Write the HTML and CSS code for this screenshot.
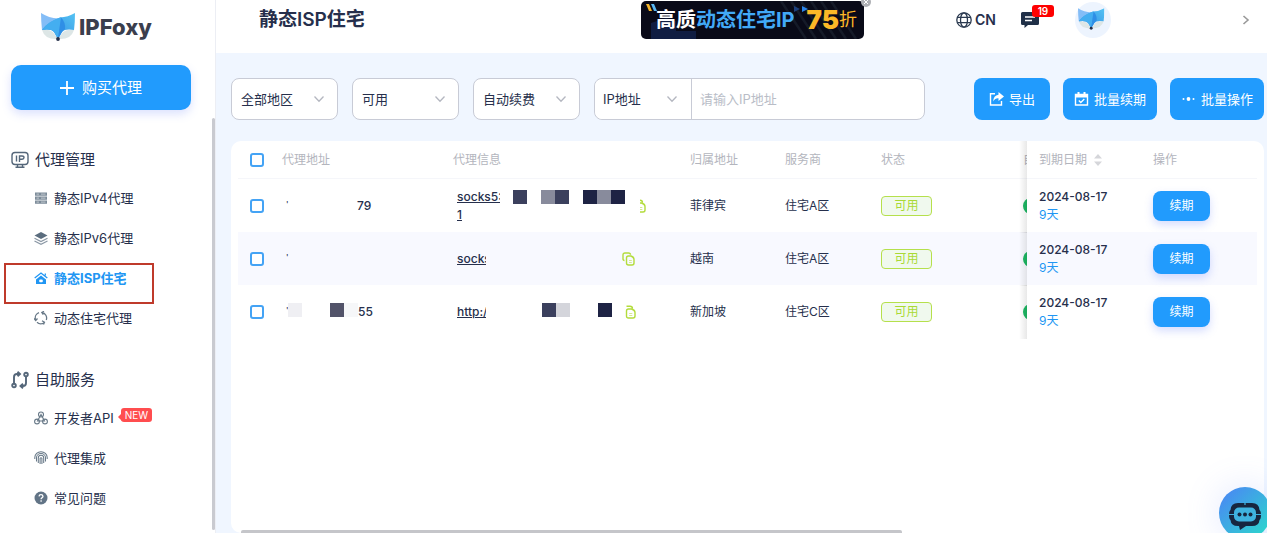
FILE: index.html
```html
<!DOCTYPE html>
<html lang="zh-CN">
<head>
<meta charset="utf-8">
<meta name="viewport" content="width=device-width, initial-scale=1">
<title>IPFoxy - 静态ISP住宅</title>
<link rel="stylesheet" href="styles.css">
</head>
<body>
<svg class="defs" aria-hidden="true">
  <defs>
    <linearGradient id="ga" x1="0" y1="0" x2="1" y2="1"><stop offset="0" stop-color="#86bdf6"/><stop offset="1" stop-color="#7fbdf8"/></linearGradient>
    <linearGradient id="gb" x1="0" y1="1" x2="1" y2="0"><stop offset="0" stop-color="#2c86e2"/><stop offset="1" stop-color="#55c3f3"/></linearGradient>
  </defs>
  <symbol id="fox" viewBox="0 0 34 28">
    <path d="M1 17Q8 16 12 19L17 26Q4 27 1 17ZM33 17Q26 16 22 19L17 26Q30 27 33 17Z" fill="#dde6e6"/>
    <path d="M0 0Q8 5 17 5.500L13 12 1 17Q0 8 0 0Z" fill="url(#ga)"/>
    <path d="M1 17Q7 9 19 4.500 27 4 34 0 34 9 33 17 24 15.500 21 19L17 26 13 19Q10 15.500 1 17Z" fill="url(#gb)"/>
    <path d="M1 17Q7 8 20 4.300L17 26 13 19Q10 15.500 1 17Z" fill="#44aef0"/>
    <path d="M17 26 20 4.300Q25 10 24 16.200 22 17 21 19Z" fill="#2f8fe6"/>
    <circle cx="17" cy="26" r="1.900" fill="#26304a"/>
  </symbol>
  <symbol id="chev" viewBox="0 0 12 8"><path d="M1.500 1.500 6 6.200 10.500 1.500" fill="none" stroke="currentColor" stroke-width="1.300"/></symbol>
  <symbol id="copy" viewBox="0 0 13 14"><path d="M2.500 8.500Q1 8.500 1 7V3Q1 1 3 1H6.500Q8.500 1 8.500 2.800M6.500 4H9Q12 5 12 7.500V11Q12 13 10 13H6.500Q4.500 13 4.500 11V6Q4.500 4 6.500 4Z" fill="none" stroke="#b3dc3c" stroke-width="1.400"/><path d="M7 8.500H9.800M7 10.500H9.800" stroke="#d3eb90" stroke-width="1"/></symbol>
  <symbol id="copy2" viewBox="0 0 11 14"><path d="M1.500 1.300H5Q7.500 1.300 7.500 3.500M3.500 4H6.500Q10 5 10 7.500V11Q10 13 8 13H3.500Q1.500 13 1.500 11V6Q1.500 4 3.500 4Z" fill="none" stroke="#b3dc3c" stroke-width="1.400"/><path d="M4.200 8.500H7.300M4.200 10.500H7.300" stroke="#d3eb90" stroke-width="1"/></symbol>
</svg>

<div class="app">
  <aside class="sidebar">
    <a class="logo" href="#"><svg class="logo-mark"><use href="#fox"/></svg><span>IPFoxy</span></a>
    <button class="buy" type="button"><svg viewBox="0 0 14 14"><path d="M7 0V14M0 7H14" stroke="#fff" stroke-width="1.800"/></svg>购买代理</button>
    <nav class="menu">
      <h2><svg viewBox="0 0 18 18" fill="none" stroke="#55677a" stroke-width="1.400"><rect x="1" y="1.500" width="16" height="12" rx="3"/><path d="M5.500 4.500V10.500M8.500 11V5H11Q13 5 13 6.600T11 8.300H8.500M6.500 13.500V16M11.500 13.500V16M4.500 16.300H13.500"/></svg>代理管理</h2>
      <ul>
        <li><a href="#"><svg viewBox="0 0 14 14"><path d="M1 1.500H13V4.700H1ZM1 5.600H13V8.700H1ZM1 9.600H13V12.700H1Z" fill="#7c8b99"/><path d="M2.500 3.100H5M2.500 7.100H5M2.500 11.100H5M7 3.100H11.500M7 7.100H11.500M7 11.100H11.500" stroke="#dfe4e8" stroke-width=".7"/></svg>静态IPv4代理</a></li>
        <li><a href="#"><svg viewBox="0 0 14 14"><path d="M7 1 13.500 4.500 7 8 .5 4.500Z" fill="#5b6d7e"/><path d="M.5 7.200 7 10.500 13.500 7.200M.5 10 7 13.300 13.500 10" fill="none" stroke="#8b98a5" stroke-width="1.200"/></svg>静态IPv6代理</a></li>
        <li class="active"><a href="#"><svg viewBox="0 0 14 14"><path d="M.7 7 7 2 13.300 7M11.300 2.500V4.500" fill="none" stroke="#2196f3" stroke-width="1.300"/><path d="M7 4.500 12 8.500V13H2V8.500Z" fill="#2196f3"/><rect x="5.200" y="8.500" width="3.600" height="2.800" rx="1" fill="#fff"/></svg>静态ISP住宅</a></li>
        <li><a href="#"><svg viewBox="0 0 14 14"><path d="M5 1.600A5.700 5.700 0 0 0 1.500 8.500M3 11.300A5.700 5.700 0 0 0 10.500 11.500M12.300 9A5.700 5.700 0 0 0 8 1.500M0 7.500 1.700 9.500 3.500 7.500M8 9.700 10.500 11.300 9.500 13.500M10 .3 7.800 1.500 9.300 3.700" fill="none" stroke="#687988" stroke-width="1.300"/></svg>动态住宅代理</a></li>
      </ul>
      <h2><svg viewBox="0 0 18 18" fill="none" stroke="#55677a" stroke-width="1.900"><path d="M3 12V6Q3 3 6 3H8.500M6.500 .8 9 3 6.500 5.300M15 6V12Q15 15 12 15H10M12 12.700 9.500 15 12 17.200"/><circle cx="3" cy="14.500" r="1.800"/><circle cx="15" cy="3.500" r="1.800"/></svg>自助服务</h2>
      <ul>
        <li><a href="#"><svg viewBox="0 0 14 14" fill="none" stroke="#687988" stroke-width="1.100"><circle cx="7" cy="3.500" r="2.500"/><circle cx="3" cy="10.500" r="2.400"/><circle cx="11" cy="10.500" r="2.400"/><path d="M7 3.500 3.500 10H10.500Z"/></svg>开发者API</a><span class="new">NEW</span></li>
        <li><a href="#"><svg viewBox="0 0 14 14" fill="none" stroke="#687988" stroke-width="1.050"><path d="M.8 8V6.500A6.200 5.700 0 0 1 13.200 6.500V8M2.500 10.500V6.800A4.500 4.300 0 0 1 11.500 6.800V10.500M4.300 12V7A2.700 2.700 0 0 1 9.700 7V12M6.100 13V7.300Q7 6 7.900 7.300V13"/></svg>代理集成</a></li>
        <li><a href="#"><svg viewBox="0 0 14 14"><circle cx="7" cy="7" r="6.500" fill="#627486"/><path d="M5 5.400Q5.200 3.700 7 3.700T9 5.300Q9 6.300 7.900 6.800Q7.100 7.200 7.100 8.300M7.100 9.300V10.700" fill="none" stroke="#fff" stroke-width="1.300"/></svg>常见问题</a></li>
      </ul>
    </nav>
    <div class="side-thumb"></div>
  </aside>

  <div class="page">
    <header class="header">
      <h1>静态ISP住宅</h1>
      <a class="banner" href="#">
        <svg class="banner-art" viewBox="0 0 223 38" preserveAspectRatio="none"><path d="M10 22 25 17 35 20V38H10ZM35 30H55V38H35Z" fill="#101d42"/><path d="M140 0 165 38M150 0 175 38M160 0 185 38M170 0 195 38M180 0 205 38M190 0 215 38" stroke="#151a28" stroke-width="2.500"/><path d="M5 3H8L11 10H8Z" fill="#f5b52c"/><path d="M10 3H13L16 10H13Z" fill="#59b8f5"/><path d="M153 5 159 8 153 11Z" fill="#1c3f7c"/><path d="M161 5 167 8 161 11Z" fill="#2b83e8"/></svg>
        <span class="b-white">高质</span><span class="b-blue">动态住宅IP</span><strong>75</strong><span class="b-off">折</span>
        <svg class="banner-close" viewBox="0 0 10 10"><circle cx="5" cy="5" r="5" fill="#aeb0b5"/><path d="M3 3 7 7M7 3 3 7" stroke="#fff" stroke-width="1"/></svg>
      </a>
      <div class="tools">
        <button class="lang" type="button"><svg viewBox="0 0 16 16" fill="none" stroke="#2b3a50" stroke-width="1.300"><circle cx="8" cy="8" r="7.200"/><ellipse cx="8" cy="8" rx="3.500" ry="7.200"/><path d="M1.500 5.300H14.500M1.500 10.700H14.500"/></svg>CN</button>
        <button class="msg" type="button" aria-label="消息"><svg viewBox="0 0 18 16"><path d="M1.500 0H16.500Q18 0 18 1.500V11.500Q18 13 16.500 13H7L3.500 16V13H1.500Q0 13 0 11.500V1.500Q0 0 1.500 0Z" fill="#1f2f47"/><path d="M4 5H14M4 8.500H11" stroke="#fff" stroke-width="1.400"/></svg><span class="count">19</span></button>
        <a class="avatar" href="#" aria-label="账户"><svg><use href="#fox"/></svg></a>
        <button class="more" type="button" aria-label="展开"><svg viewBox="0 0 8 10"><path d="M1.500 1 6 5 1.500 9" fill="none" stroke="#999" stroke-width="1.600"/></svg></button>
      </div>
    </header>

    <main class="content">
      <div class="toolbar">
        <label class="pick"><select aria-label="地区"><option>全部地区</option></select><svg><use href="#chev"/></svg></label>
        <label class="pick"><select aria-label="状态"><option>可用</option></select><svg><use href="#chev"/></svg></label>
        <label class="pick"><select aria-label="续费"><option>自动续费</option></select><svg><use href="#chev"/></svg></label>
        <div class="search">
          <label class="pick"><select aria-label="搜索类型"><option>IP地址</option></select><svg><use href="#chev"/></svg></label>
          <input type="text" placeholder="请输入IP地址" aria-label="IP地址">
        </div>
        <div class="actions">
          <button type="button"><svg viewBox="0 0 15 14"><path d="M6 1.800H1.500V13H12.500V9" fill="none" stroke="#fff" stroke-width="1.400"/><path d="M9.500 0 15 4.500 9.500 9V6.300Q6 6 4.300 9.500Q4.300 3.500 9.500 2.800Z" fill="#fff"/></svg>导出</button>
          <button type="button"><svg viewBox="0 0 15 14"><path d="M1.500 2.500H13.500V13H1.500Z" fill="none" stroke="#fff" stroke-width="1.400"/><path d="M1 2H14V5.500H1ZM3.500 0H5.500V3H3.500ZM9.500 0H11.500V3H9.500Z" fill="#fff"/><path d="M4.800 8.500 6.800 10.500 10.300 7" fill="none" stroke="#fff" stroke-width="1.300"/></svg>批量续期</button>
          <button type="button"><svg viewBox="0 0 15 14" fill="#fff"><circle cx="2.500" cy="7" r="1"/><circle cx="7.500" cy="7" r="1.900"/><circle cx="12.500" cy="7" r="1"/></svg>批量操作</button>
        </div>
      </div>

      <section class="card">
        <table>
          <colgroup><col class="c-check"><col class="c-addr"><col class="c-info"><col class="c-area"><col class="c-isp"><col><col class="c-auto"><col class="c-date"><col class="c-op"></colgroup>
          <thead>
            <tr>
              <th class="check"><input type="checkbox" aria-label="全选"></th>
              <th>代理地址</th><th>代理信息</th><th>归属地址</th><th>服务商</th><th>状态</th><th class="auto">自</th>
              <th class="fixed"><span class="sort">到期日期<svg viewBox="0 0 10 14" fill="#d5d6da"><path d="M5 1 9 5.500H1ZM5 13 9 8.500H1Z"/></svg></span></th><th>操作</th>
            </tr>
          </thead>
          <tbody>
            <tr>
              <td class="check"><input type="checkbox" aria-label="选择第1行"></td>
              <td class="pad"><div class="mix"><span class="tick">'</span><span class="tail">79</span></div></td>
              <td class="pad"><div class="mix tall"><a class="uri" href="#"><span>socks5:/</span><br>1</a><div class="mosaic"><i class="k2"></i><i></i><i class="k4"></i><i class="k2"></i><i></i><i class="k1"></i><i class="k4"></i><i class="k1"></i></div><button class="copy cut" type="button" aria-label="复制"><svg><use href="#copy2"/></svg></button></div></td>
              <td>菲律宾</td><td>住宅A区</td><td><span class="tag">可用</span></td>
              <td class="auto"><span class="switch"></span></td>
              <td class="fixed"><time>2024-08-17</time><em>9天</em></td>
              <td><button class="renew" type="button">续期</button></td>
            </tr>
            <tr class="odd">
              <td class="check"><input type="checkbox" aria-label="选择第2行"></td>
              <td class="pad"><div class="mix"><span class="tick">'</span></div></td>
              <td class="pad"><div class="mix"><a class="uri short" href="#">socks</a><button class="copy far" type="button" aria-label="复制"><svg><use href="#copy"/></svg></button></div></td>
              <td>越南</td><td>住宅A区</td><td><span class="tag">可用</span></td>
              <td class="auto"><span class="switch"></span></td>
              <td class="fixed"><time>2024-08-17</time><em>9天</em></td>
              <td><button class="renew" type="button">续期</button></td>
            </tr>
            <tr>
              <td class="check"><input type="checkbox" aria-label="选择第3行"></td>
              <td class="pad"><div class="mix"><span class="tick">'</span><div class="mosaic"><i class="k6"></i><i></i><i></i><i class="k3"></i><i class="k7"></i></div><span>55</span></div></td>
              <td class="pad"><div class="mix"><a class="uri short" href="#">http:/</a><div class="mosaic end"><i class="k2"></i><i class="k5"></i><i></i><i></i><i class="k1"></i></div><button class="copy near" type="button" aria-label="复制"><svg><use href="#copy2"/></svg></button></div></td>
              <td>新加坡</td><td>住宅C区</td><td><span class="tag">可用</span></td>
              <td class="auto"><span class="switch"></span></td>
              <td class="fixed"><time>2024-08-17</time><em>9天</em></td>
              <td><button class="renew" type="button">续期</button></td>
            </tr>
          </tbody>
        </table>
        <div class="scroll-thumb"></div>
      </section>
    </main>
  </div>
</div>
<button class="chat" type="button" aria-label="在线客服"><svg viewBox="0 0 34 28"><path d="M10 1H24Q31 1 31.500 8Q33 9 33 13T31.500 18Q31 24 24 24H18L12 28 11 24H10Q3 24 2.500 18Q1 17 1 13T2.500 8Q3 1 10 1Z" fill="#17263f"/><rect x="6" y="5.500" width="22" height="14" rx="5" fill="#3fb3e0"/><path d="M0 12.500H6M28 12.500H34M17 0V3" stroke="#3fb3e0" stroke-width="1.200"/><circle cx="11.500" cy="12.500" r="2" fill="#17263f"/><circle cx="17" cy="12.500" r="2" fill="#17263f"/><circle cx="22.500" cy="12.500" r="2" fill="#17263f"/></svg></button>
</body>
</html>
```
FILE: styles.css
```css
*, *::before, *::after { box-sizing: border-box; }
body {
  margin: 0;
  font: 400 12px/18px Inter, "Noto Sans CJK SC", sans-serif;
  color: #262f4c;
  background: #f0f6ff;
}
button, input, select { font: inherit; color: inherit; }
button { border: 0; padding: 0; background: none; cursor: pointer; }
a { color: inherit; text-decoration: none; }
h1, h2, ul { margin: 0; padding: 0; list-style: none; }
svg { display: block; flex: none; }
.defs { position: absolute; width: 0; height: 0; }

.app { display: flex; min-height: 100vh; }

/* Sidebar */
.sidebar {
  position: relative;
  flex: none;
  width: 216px;
  background: #fff;
  border-right: 1px solid #eceef4;
}
.logo {
  display: flex;
  align-items: center;
  gap: 4px;
  height: 65px;
  padding: 0 0 11px 41px;
  font-size: 22px;
  font-weight: 800;
  color: #3b3e4d;
}
.logo-mark { width: 34px; height: 28px; }
.buy {
  display: flex;
  align-items: center;
  justify-content: center;
  gap: 8px;
  width: 180px;
  height: 45px;
  margin: 0 0 32px 11px;
  border-radius: 10px;
  background: #219bfd;
  box-shadow: 0 4px 10px rgba(90, 120, 250, .22);
  color: #fff;
  font-size: 15px;
}
.buy svg { width: 14px; height: 14px; }
.menu h2 {
  display: flex;
  align-items: center;
  gap: 6px;
  height: 36px;
  padding-left: 11px;
  font-size: 15px;
  font-weight: 400;
}
.menu h2 svg { width: 18px; height: 18px; }
.menu ul + h2 { margin-top: 24px; }
.menu li { position: relative; display: flex; align-items: center; height: 40px; padding-left: 34px; font-size: 13px; }
.menu a { display: flex; align-items: center; gap: 6px; }
.menu a svg { width: 14px; height: 14px; }
.menu .active { color: #2196f3; font-weight: 700; }
.menu .active::after {
  content: "";
  position: absolute;
  left: 4px;
  top: 5px;
  width: 150px;
  height: 41px;
  border: 2px solid #bf3a2b;
}
.new {
  position: relative;
  margin: 0 0 6px 7px;
  padding: 0 4px;
  border-radius: 3px;
  background: #ff4d4f;
  color: #fff;
  font-size: 10px;
  line-height: 14px;
}
.new::before {
  content: "";
  position: absolute;
  left: -3px;
  bottom: 1px;
  border: 4px solid transparent;
  border-left: 0;
  border-right-color: #ff4d4f;
}
.side-thumb { position: absolute; top: 118px; right: 0; bottom: 3px; width: 3px; background: #c9cad0; border-radius: 2px; }

/* Header */
.page { flex: 1; min-width: 0; display: flex; flex-direction: column; }
.header {
  display: grid;
  grid-template-columns: 1fr auto 1fr;
  align-items: center;
  height: 53px;
  padding: 0 17px 13px 39px;
  background: #fff;
}
.header h1 { padding-left: 4px; font-size: 19px; font-weight: 600; line-height: 24px; }
.banner {
  position: relative;
  display: flex;
  align-items: center;
  width: 223px;
  height: 38px;
  padding-left: 15px;
  border-radius: 5px;
  background: #090a18;
  font-size: 20px;
  font-weight: 700;
  line-height: 38px;
  white-space: nowrap;
}
.banner-art { position: absolute; inset: 0; width: 100%; height: 100%; }
.banner span, .banner strong { position: relative; }
.b-white { color: #fff; }
.b-blue { color: #42a9f7; }
.banner strong { margin-left: 12px; color: #fdb827; font-size: 26px; font-weight: 900; }
.b-off { color: #fdb827; font-size: 18px; font-weight: 400; }
.banner-close { position: absolute; top: -4px; right: -7px; width: 10px; height: 10px; }
.tools { display: flex; align-items: center; padding-left: 92px; }
.lang { display: flex; align-items: center; gap: 3px; font-size: 14px; font-weight: 600; }
.lang svg { width: 16px; height: 16px; }
.msg { position: relative; margin-left: 25px; }
.msg svg { width: 18px; height: 16px; }
.count {
  position: absolute;
  left: 11px;
  top: -7px;
  width: 22px;
  border-radius: 3px;
  background: #fe0000;
  color: #fff;
  font-size: 10px;
  font-weight: 600;
  line-height: 12px;
}
.avatar { display: grid; place-items: center; width: 36px; height: 36px; margin-left: 36px; border-radius: 50%; background: #edf4fe; }
.avatar svg { width: 30px; height: 25px; }
.avatar use { transform: scale(.88); }
.more { margin-left: auto; }
.more svg { width: 8px; height: 10px; }

/* Toolbar */
.content { flex: 1; display: flex; flex-direction: column; padding: 25px 3px 0 15px; }
.toolbar { display: flex; gap: 14px; font-size: 13px; }
.pick { display: grid; flex: none; width: 107px; align-items: center; }
.pick select, .pick svg { grid-area: 1 / 1; }
.pick select {
  appearance: none;
  width: 100%;
  height: 42px;
  padding: 0 9px;
  border: 1px solid #c8cbd6;
  border-radius: 8px;
  background: #fff;
}
.pick svg { justify-self: end; width: 12px; height: 8px; margin-right: 13px; color: #b4b7c0; pointer-events: none; }
.search { display: flex; flex: 0 1 331px; border: 1px solid #c8cbd6; border-radius: 8px; background: #fff; }
.search .pick { width: 97px; border-right: 1px solid #c8cbd6; }
.search select { height: 40px; padding: 0 8px; border: 0; }
.search input { flex: 1; min-width: 0; padding: 0 8px; border: 0; border-radius: 8px; background: none; }
.search input::placeholder { color: #b9bdc7; opacity: 1; }
.actions { display: flex; gap: 13px; margin-left: auto; }
.actions button {
  display: flex;
  align-items: center;
  gap: 5px;
  height: 42px;
  padding: 0 11px;
  border-radius: 8px;
  background: #219bfd;
  color: #fff;
}
.actions button:first-child { padding: 0 15px; }
.actions svg { width: 15px; height: 14px; }

/* Table */
.card { position: relative; flex: 1; margin-top: 21px; padding: 0 7px; border-radius: 10px; background: #fff; }
table { width: 100%; table-layout: fixed; border-collapse: separate; border-spacing: 0; }
.c-check { width: 32px; }
.c-addr { width: 171px; }
.c-info { width: 237px; }
.c-area { width: 95px; }
.c-isp { width: 96px; }
.c-auto { width: 16px; }
.c-date { width: 114px; }
.c-op { width: 116px; }
th { height: 38px; padding: 0 12px; border-bottom: 1px solid #f5f6fa; color: #b3b5bd; font-weight: 400; text-align: left; white-space: nowrap; }
td { height: 53px; padding: 0 12px; white-space: nowrap; }
td.pad { padding: 0 0 0 16px; }
.odd td { background: #f8f9ff; }
.check input {
  appearance: none;
  display: block;
  width: 14px;
  height: 14px;
  margin: 0;
  border: 2px solid #44a3f5;
  border-radius: 3px;
  background: #fff;
}
.auto { overflow: hidden; padding-right: 0; text-overflow: clip; }
.fixed { position: relative; }
.fixed::before {
  content: "";
  position: absolute;
  top: 0;
  bottom: -1px;
  left: -8px;
  width: 8px;
  background: linear-gradient(to right, rgba(0, 0, 0, 0), rgba(0, 0, 0, .09));
}
.sort { display: flex; align-items: center; gap: 6px; }
.sort svg { width: 10px; height: 14px; }
.switch { display: block; width: 36px; height: 16px; border-radius: 8px; background: #1db863; }
time, em { display: block; font-style: normal; }
time { font-weight: 500; }
em { color: #2196f3; }
.mix { display: flex; align-items: flex-start; height: 18px; font-size: 12px; font-weight: 500; }
.mix.tall { height: 36px; }
.tick { width: 2px; font-size: 8px; line-height: 14px; }
.tail { margin-left: 69px; }
.uri { width: 56px; text-decoration: underline; }
.uri span { display: inline-block; width: 43px; overflow: hidden; vertical-align: top; text-decoration: underline; }
.uri.short { width: 29px; overflow: hidden; }
.mosaic { display: flex; }
.mosaic i { width: 14px; height: 14px; }
.tall .mosaic { margin-top: 2px; }
.mosaic.end { margin-left: 56px; }
.k1 { background: #1e2344; }
.k2 { background: #3b405d; }
.k3 { background: #525369; }
.k4 { background: #888b9c; }
.k5 { background: #d4d5db; }
.k6 { background: #efeff3; }
.k7 { background: #f6f7f9; }
.copy { align-self: center; }
.copy svg { width: 13px; height: 14px; }
.copy.cut { width: 6px; margin-left: 15px; overflow: hidden; display: flex; justify-content: flex-end; }
.copy.cut svg, .copy.near svg { width: 11px; }
.copy.far { margin-left: 136px; }
.copy.near { margin-left: 13px; }
.tag {
  display: block;
  width: 51px;
  border: 1px solid #b5e04c;
  border-radius: 4px;
  background: #f0f9ee;
  color: #a9d935;
  text-align: center;
}
.renew {
  display: block;
  width: 57px;
  height: 30px;
  border-radius: 8px;
  background: #219bfd;
  box-shadow: 0 4px 8px rgba(90, 120, 250, .25);
  color: #fff;
}
.scroll-thumb { position: absolute; left: 10px; bottom: 0; width: 64%; height: 3px; border-radius: 2px 2px 0 0; background: #c5c6ca; }

.chat {
  position: fixed;
  right: -4px;
  bottom: -6px;
  display: grid;
  place-items: center;
  width: 52px;
  height: 52px;
  border-radius: 50%;
  background: linear-gradient(135deg, #478ff0 15%, #2fd0d0 85%);
  box-shadow: 0 0 36px rgba(110, 140, 255, .2);
}
.chat svg { width: 34px; height: 28px; margin-top: 6px; }
```
